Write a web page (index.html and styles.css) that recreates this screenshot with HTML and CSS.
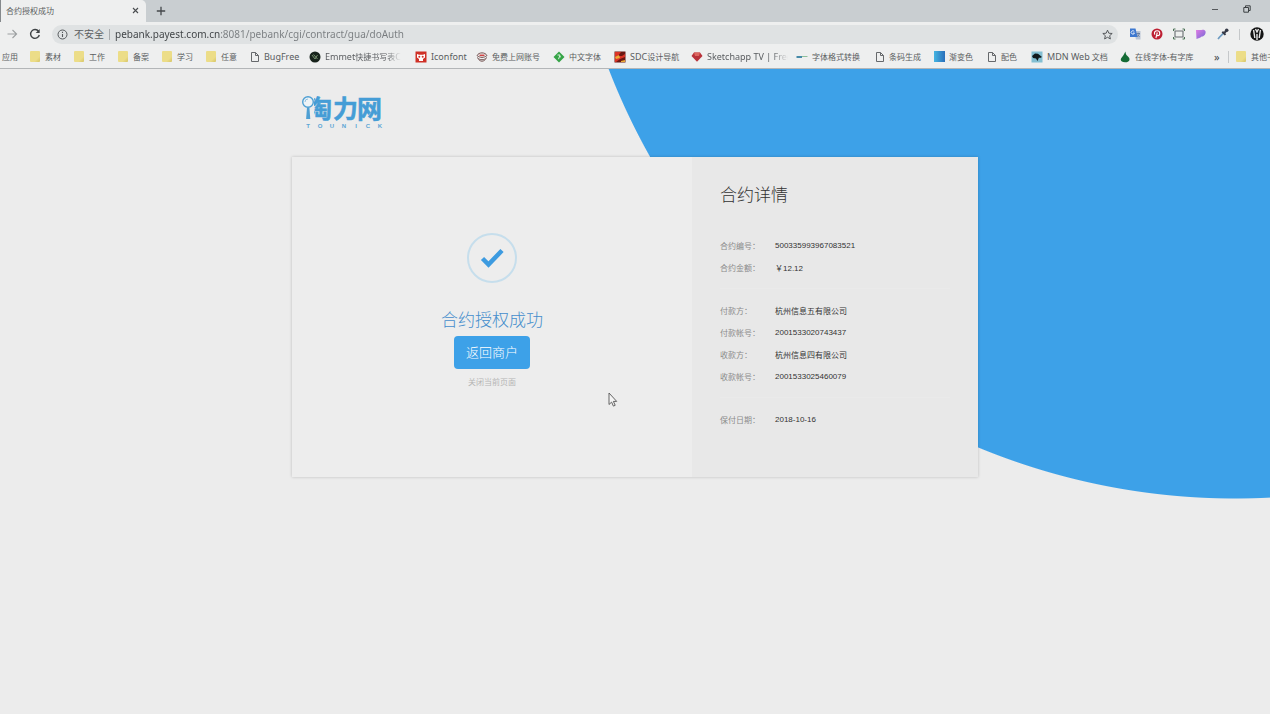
FILE: index.html
```html
<!DOCTYPE html>
<html lang="zh-CN">
<head>
<meta charset="utf-8">
<title>合约授权成功</title>
<link rel="stylesheet" href="styles.css">
</head>
<body>
<header class="browser">
  <div class="tabstrip">
    <div class="tab">
      <span class="tab-title">合约授权成功</span>
      <button class="icon-btn" aria-label="关闭标签页"><svg width="7" height="7" viewBox="0 0 7 7"><path d="M1 1l5 5M6 1L1 6" stroke="#4a4d50" stroke-width="1.1"/></svg></button>
    </div>
    <button class="icon-btn new-tab" aria-label="新标签页"><svg width="10" height="10" viewBox="0 0 10 10"><path d="M5 .8v8.4M.8 5h8.4" stroke="#44484b" stroke-width="1.3"/></svg></button>
    <div class="window-controls">
      <button class="icon-btn" aria-label="最小化"><svg width="8" height="8" viewBox="0 0 8 8"><path d="M1 4.5h6" stroke="#55595c"/></svg></button>
      <button class="icon-btn" aria-label="还原"><svg width="8" height="8" viewBox="0 0 8 8"><path d="M.8 2.5h4.7v4.7H.8zM2.5 2.3V.8h4.7v4.7H5.6" fill="none" stroke="#3c4043"/></svg></button>
    </div>
  </div>
  <div class="toolbar">
    <button class="icon-btn" aria-label="前进"><svg width="11" height="10" viewBox="0 0 11 10"><path d="M.5 5h9M5.5 1l4.1 4-4.1 4" fill="none" stroke="#9c9fa1" stroke-width="1.1"/></svg></button>
    <button class="icon-btn" aria-label="重新加载"><svg width="12" height="12" viewBox="0 0 12 12"><path d="M9.6 3.4A4.4 4.4 0 1 0 10.300 7" fill="none" stroke="#3f4346" stroke-width="1.4"/><path d="M10.700 .9v4H6.700z" fill="#3f4346"/></svg></button>
    <div class="omnibox">
      <svg width="11" height="11" viewBox="0 0 11 11"><circle cx="5.500" cy="5.500" r="4.500" fill="none" stroke="#55595c"/><path d="M5.500 5v3M5.500 2.800v1.200" stroke="#55595c" stroke-width="1.1"/></svg>
      <label class="insecure" for="url">不安全</label>
      <input class="url" id="url" type="text" value="pebank.payest.com.cn:8081/pebank/cgi/contract/gua/doAuth" spellcheck="false">
      <button class="icon-btn" aria-label="收藏"><svg width="11" height="11" viewBox="0 0 24 24"><path d="M12 2.500l2.900 6.700 7.300.6-5.500 4.800 1.600 7.100L12 18l-6.300 3.700 1.600-7.100L1.800 9.800l7.300-.6z" fill="none" stroke="#4b4f52" stroke-width="2"/></svg></button>
    </div>
    <div class="extensions">
      <button class="icon-btn" aria-label="翻译"><svg width="12" height="12" viewBox="0 0 12 12"><path d="M5 3h6.500v8.500H7z" fill="#b9c5d6"/><path d="M1 .5h5.500l2 8.500H1z" fill="#3d78d0"/><path d="M5.300 3.500A1.700 1.700 0 1 0 5.500 5H4" fill="none" stroke="#fff" stroke-width=".8"/><path d="M7.500 5.500h3.500M9.200 4.700v.8M10.300 5.600c-.3 1.500-1.300 2.500-2.300 3M8.300 6.500l2.300 2.500" fill="none" stroke="#536c92" stroke-width=".7"/></svg></button>
      <button class="icon-btn" aria-label="Pinterest"><svg width="12" height="12" viewBox="0 0 12 12"><circle cx="6" cy="6" r="5.500" fill="#bd2033"/><path d="M3.900 6.600C2.600 4.500 4.100 2.700 6.200 2.700c3.600 0 3 4.900.6 4.900-.8 0-1.100-.6-1.100-.6M6.300 4.500L4.900 10" fill="none" stroke="#fff" stroke-width="1.100"/></svg></button>
      <button class="icon-btn" aria-label="截图"><svg width="12" height="12" viewBox="0 0 12 12"><path d="M2 3h8v6H2z" fill="none" stroke="#686d70" stroke-width="1.100"/><path d="M.5 3V1h2M9.500 1h2v2M11.500 9v2h-2M2.500 11h-2V9" fill="none" stroke="#4b7055"/></svg></button>
      <button class="icon-btn" aria-label="画笔"><svg width="12" height="12" viewBox="0 0 12 12"><defs><linearGradient id="violet" x2="1" y2="1"><stop offset="0" stop-color="#e07be4"/><stop offset="1" stop-color="#7167d5"/></linearGradient></defs><path d="M1 2h5.500c4-1 5 2 3.500 4.500S6.500 8 5.500 9.500L1.500 11z" fill="url(#violet)"/></svg></button>
      <button class="icon-btn" aria-label="取色器"><svg width="12" height="12" viewBox="0 0 12 12"><path d="M6.500 5.200L2 9.700l-.9 1.400" stroke="#6e9cc2" stroke-width="1.700"/><path d="M5.300 3.700l3.200 3.200M7 5.200l2.800-2.900" stroke="#373b48" stroke-width="2"/><circle cx="9.700" cy="2.300" r="1.800" fill="#373b48"/></svg></button>
      <span class="divider"></span>
      <button class="icon-btn" aria-label="用户"><svg width="14" height="14" viewBox="0 0 14 14"><circle cx="7" cy="7" r="6.700" fill="#151515"/><path d="M3.600 3l1.200 8M10.400 3l-1.200 8M5.500 2l1.500 3 1.500-3M7 7v6" fill="none" stroke="#e8e8e8" stroke-width="1.400"/></svg></button>
    </div>
  </div>
  <nav class="bookmarks" aria-label="书签栏">
    <a class="bookmark" href="#">应用</a>
    <a class="bookmark" href="#"><i class="folder"></i>素材</a>
    <a class="bookmark" href="#"><i class="folder"></i>工作</a>
    <a class="bookmark" href="#"><i class="folder"></i>备案</a>
    <a class="bookmark" href="#"><i class="folder"></i>学习</a>
    <a class="bookmark" href="#"><i class="folder"></i>任意</a>
    <a class="bookmark latin" href="#"><svg width="10" height="12" viewBox="0 0 10 12"><path d="M1.500 1.500h4l3 3v6h-7zM5.500 1.500v3h3" fill="none" stroke="#66696c"/></svg>BugFree</a>
    <a class="bookmark faded" href="#"><svg width="12" height="12" viewBox="0 0 12 12"><circle cx="6" cy="6" r="5.500" fill="#17231b"/><path d="M3 4l3 4 2.500-4M4.500 3.500l4 4.500" fill="none" stroke="#7f9a75" stroke-width=".9"/></svg><span><span class="latin">Emmet</span>快捷书写表<span class="latin">C</span></span></a>
    <a class="bookmark latin" href="#"><svg width="12" height="12" viewBox="0 0 12 12"><path d="M.5.5h11v11H.5z" fill="#cf3026"/><path d="M2 3l2 .7h4L10 3v3.500L8 8v2H4V8L2 6.500z" fill="#fff"/><circle cx="4.300" cy="5.800" r="1" fill="#cf3026"/><circle cx="7.700" cy="5.800" r="1" fill="#cf3026"/></svg>Iconfont</a>
    <a class="bookmark" href="#"><svg width="12" height="12" viewBox="0 0 12 12"><path d="M1 4.500C3 1 9 1 11 4.500 8 7 4 7 1 4.500zM1 6.500c3 3 7 3 10 0M2.500 8.500c2.500 2.300 4.500 2.300 7 0" fill="none" stroke="#735250"/><path d="M3.500 4.300h5" stroke="#d04444" stroke-width="1.500"/></svg>免费上网账号</a>
    <a class="bookmark" href="#"><svg width="12" height="12" viewBox="0 0 12 12"><path d="M6 .5L11.500 6 6 11.500.5 6z" fill="#35a447"/><path d="M4.500 4H7L5.500 8.200M6.500 5.800H8" stroke="#d9f0db" fill="none"/></svg>中文字体</a>
    <a class="bookmark" href="#"><svg width="12" height="12" viewBox="0 0 12 12"><path d="M.5.500h11v11H.5z" fill="#6b1712"/><path d="M1 1h6L4 5h4l3-2v3L6 8l-4 3H1z" fill="#dc3426"/><path d="M1 6l4-2 1 3-4 1zM7 10l4-1v2H7z" fill="#ecac36"/></svg><span><span class="latin">SDC</span>设计导航</span></a>
    <a class="bookmark latin faded" href="#"><svg width="12" height="12" viewBox="0 0 12 12"><path d="M3 1.500h6L11.500 5 6 10.800.5 5z" fill="#b8323a"/><path d="M3 1.500h6L8 5H4z" fill="#dc6760"/></svg><span>Sketchapp TV | Free</span></a>
    <a class="bookmark" href="#"><svg width="12" height="12" viewBox="0 0 12 12"><path d="M.5 6H6" stroke="#478aa8" stroke-width="2"/><path d="M6 5.500h5.500" stroke="#8ebf9a"/></svg>字体格式转换</a>
    <a class="bookmark" href="#"><svg width="10" height="12" viewBox="0 0 10 12"><path d="M1.500 1.500h4l3 3v6h-7zM5.500 1.500v3h3" fill="none" stroke="#66696c"/></svg>条码生成</a>
    <a class="bookmark" href="#"><i class="gradient-tile"></i>渐变色</a>
    <a class="bookmark" href="#"><svg width="10" height="12" viewBox="0 0 10 12"><path d="M1.500 1.500h4l3 3v6h-7zM5.500 1.500v3h3" fill="none" stroke="#66696c"/></svg>配色</a>
    <a class="bookmark" href="#"><svg width="12" height="12" viewBox="0 0 12 12"><path d="M.5.500h11v11H.5z" fill="#83bfd2"/><path d="M1 5l3-2.500 3 .3L11 6 9 7 8 6.500 6.500 10 5 7.500 2 7z" fill="#111a1d"/></svg><span><span class="latin">MDN Web</span> 文档</span></a>
    <a class="bookmark" href="#"><svg width="12" height="12" viewBox="0 0 12 12"><path d="M6.500.5c.2 2 .2 3 2 4.500 4 3.500 1.500 6.300-2.500 6.300S.2 9 3.500 5.500C5 4 5 2.500 6.500.5z" fill="#146b35"/></svg>在线字体-有字库</a>
    <button class="icon-btn more" aria-label="更多书签">»</button>
    <a class="bookmark other" href="#"><i class="folder"></i>其他书签</a>
  </nav>
</header>

<main class="page">
  <div class="content">
    <svg class="logo" width="86" height="38" viewBox="0 0 86 38" role="img" aria-label="淘力网 TOUNICK">
      <text class="logo-name" x="5 31 55" y="24">淘力网</text>
      <path class="logo-mask" d="M0 0h12v29H0z"/>
      <circle cx="6" cy="8" r="5.300" fill="#eef3f6" stroke="#4e9fd3" stroke-width="1.400"/>
      <path d="M3 8a3 3 0 0 1 3-3" fill="none" stroke="#8fc1e2"/>
      <path d="M5 13.500h2.400l.9 11.500H4.100z" fill="#4e9fd3"/>
      <text class="logo-sub" x="6 18 30 42 54 66 78" y="34">TOUNICK</text>
    </svg>
    <section class="card">
      <div class="result">
        <svg width="50" height="50" viewBox="0 0 50 50"><circle cx="25" cy="25" r="24" fill="none" stroke="#c6deec" stroke-width="2"/><path d="M15.500 25.500l6 6L35 17.500" fill="none" stroke="#3d9be0" stroke-width="4.500"/></svg>
        <h1 class="result-title">合约授权成功</h1>
        <button class="return">返回商户</button>
        <a class="close" href="#">关闭当前页面</a>
      </div>
      <div class="details">
        <h2 class="details-title">合约详情</h2>
        <dl class="group">
          <div class="row"><dt>合约编号：</dt><dd>500335993967083521</dd></div>
          <div class="row"><dt>合约金额：</dt><dd>￥12.12</dd></div>
        </dl>
        <dl class="group">
          <div class="row"><dt>付款方：</dt><dd>杭州信息五有限公司</dd></div>
          <div class="row"><dt>付款帐号：</dt><dd>2001533020743437</dd></div>
          <div class="row"><dt>收款方：</dt><dd>杭州信息四有限公司</dd></div>
          <div class="row"><dt>收款帐号：</dt><dd>2001533025460079</dd></div>
        </dl>
        <dl class="group">
          <div class="row"><dt>保付日期：</dt><dd>2018-10-16</dd></div>
        </dl>
      </div>
    </section>
  </div>
</main>
<svg class="pointer" width="10" height="16" viewBox="0 0 10 16"><path d="M1 1v11.500l2.600-2.400 1.800 4 1.800-.8-1.800-3.900h3.300z" fill="#f4f4f4" stroke="#555" stroke-width=".9"/></svg>
</body>
</html>
```

FILE: styles.css
```css
* { box-sizing: border-box; }

body {
  margin: 0;
  min-height: 100vh;
  display: flex;
  flex-direction: column;
  overflow: hidden;
  background: #ececec;
  color: #333;
  font-family: "Liberation Sans", "Noto Sans CJK SC", sans-serif;
  font-size: 8px;
}

h1, h2, dl, dt, dd { margin: 0; font-weight: 300; }
a { color: inherit; text-decoration: none; }
svg { display: block; flex: none; }

.icon-btn {
  display: flex;
  flex: none;
  padding: 0;
  border: 0;
  background: none;
  color: #44484b;
  font: inherit;
}

/* Browser frame */
.browser {
  font-family: "Noto Sans", "Noto Sans CJK SC", sans-serif;
  background: #eeefef;
  color: #5a5d60;
  border-bottom: 1px solid #b3b6b8;
}

.tabstrip {
  display: flex;
  height: 22px;
  align-items: center;
  background: #c9ced1;
}

.tab {
  display: flex;
  width: 146px;
  height: 22px;
  align-items: center;
  justify-content: space-between;
  padding: 0 7px 1px 5px;
  border-left: 1px solid #85898c;
  border-radius: 0 5px 0 0;
  background: #eeefef;
}

.new-tab { margin-left: 10px; }

.window-controls {
  display: flex;
  gap: 24px;
  margin: 0 19px 4px auto;
}

.toolbar {
  display: flex;
  height: 25px;
  align-items: center;
  gap: 11px;
  padding: 0 6px 1px 7px;
}

.omnibox {
  display: flex;
  flex: 1;
  height: 19px;
  align-items: center;
  padding: 0 5px;
  border-radius: 10px;
  background: #dfe2e3;
  font-size: 10px;
}

.insecure {
  margin: 0 5px 0 6px;
  padding-right: 5px;
  border-right: 1px solid #a9acae;
  line-height: 11px;
}

.url {
  flex: 1;
  min-width: 0;
  padding: 0;
  border: 0;
  outline: 0;
  font: inherit;
  color: transparent;
  background: linear-gradient(90deg, #3c4043 105px, #787c7f 105px);
  -webkit-background-clip: text;
  background-clip: text;
}

.extensions {
  display: flex;
  align-items: center;
  gap: 10px;
}

.divider {
  width: 1px;
  height: 11px;
  background: #c5c8ca;
}

.bookmarks {
  display: grid;
  height: 21px;
  align-items: center;
  padding: 0 0 2px 2px;
  grid-template-columns: 28px 44px 44px 44px 44px 44px 59px 106px 61px 77px 61px 77px 105px 79px 59px 53px 44px 88px 95px 14px 1fr;
}

.bookmark {
  display: flex;
  min-width: 0;
  align-items: center;
  gap: 4px;
  line-height: 12px;
  white-space: nowrap;
}

.latin { font-size: 9px; }

.faded {
  padding-right: 8px;
}

.faded > span {
  overflow: hidden;
  -webkit-mask-image: linear-gradient(90deg, #000 80%, transparent);
  mask-image: linear-gradient(90deg, #000 80%, transparent);
}

.folder {
  flex: none;
  width: 10px;
  height: 11px;
  margin-right: 1px;
  border-radius: 1px;
  background: linear-gradient(135deg, #ecdd88 70%, #d5c465);
}

.gradient-tile {
  flex: none;
  width: 11px;
  height: 11px;
  background: linear-gradient(90deg, #45b5e2, #2a6fba);
}

.more { font-size: 11px; line-height: 12px; }

.other {
  padding-left: 7px;
  border-left: 1px solid #c5c8ca;
  overflow: hidden;
}

/* Page */
.page {
  flex: 1;
  padding: 25px 20px;
  background: radial-gradient(circle at calc(50% + 600px) -242px, #3da1e8 671px, transparent 672px);
}

.content {
  max-width: 686px;
  margin: 0 auto;
}

.logo { margin: 0 0 25px 10px; overflow: visible; }

.logo-name {
  font-family: "Noto Sans CJK SC", sans-serif;
  font-size: 25px;
  font-weight: 700;
  fill: #459dd6;
  stroke: #459dd6;
  stroke-width: .5px;
}

.logo-mask { fill: #ececec; }

.logo-sub {
  font-family: "Liberation Sans", sans-serif;
  font-size: 6px;
  font-weight: 700;
  text-anchor: middle;
  fill: #5ca5d5;
}

.card {
  display: grid;
  grid-template-columns: 400fr 286fr;
  background: #ededed;
  box-shadow: 0 0 3px rgba(0, 0, 0, .2);
}

.result {
  display: flex;
  flex-direction: column;
  align-items: center;
  padding: 76px 20px;
}

.result-title {
  margin: 25px 0 3px;
  color: #458dcc;
  font-size: 17px;
  line-height: 25px;
}

.return {
  padding: 7px 12px;
  border: 0;
  border-radius: 4px;
  background: #3da1e8;
  color: #fff;
  font-family: inherit;
  font-size: 13px;
  font-weight: 300;
  line-height: 19px;
}

.close {
  margin-top: 8px;
  color: #b5b5b5;
  line-height: 12px;
}

.details {
  padding: 26px 28px 47px;
  background: #e8e8e8;
}

.details-title {
  margin-bottom: 26px;
  font-size: 17px;
  line-height: 25px;
}

.group + .group {
  margin-top: 10px;
  padding-top: 10px;
  border-top: 1px solid #eaeaea;
}

.row {
  display: flex;
  align-items: center;
  height: 22px;
}

.row dt {
  width: 55px;
  color: #8b8b8b;
  font-weight: 400;
}

.row dd { font-weight: 400; }

/* Mouse pointer over the page */
.pointer {
  position: absolute;
  left: 608px;
  top: 392px;
}
```
